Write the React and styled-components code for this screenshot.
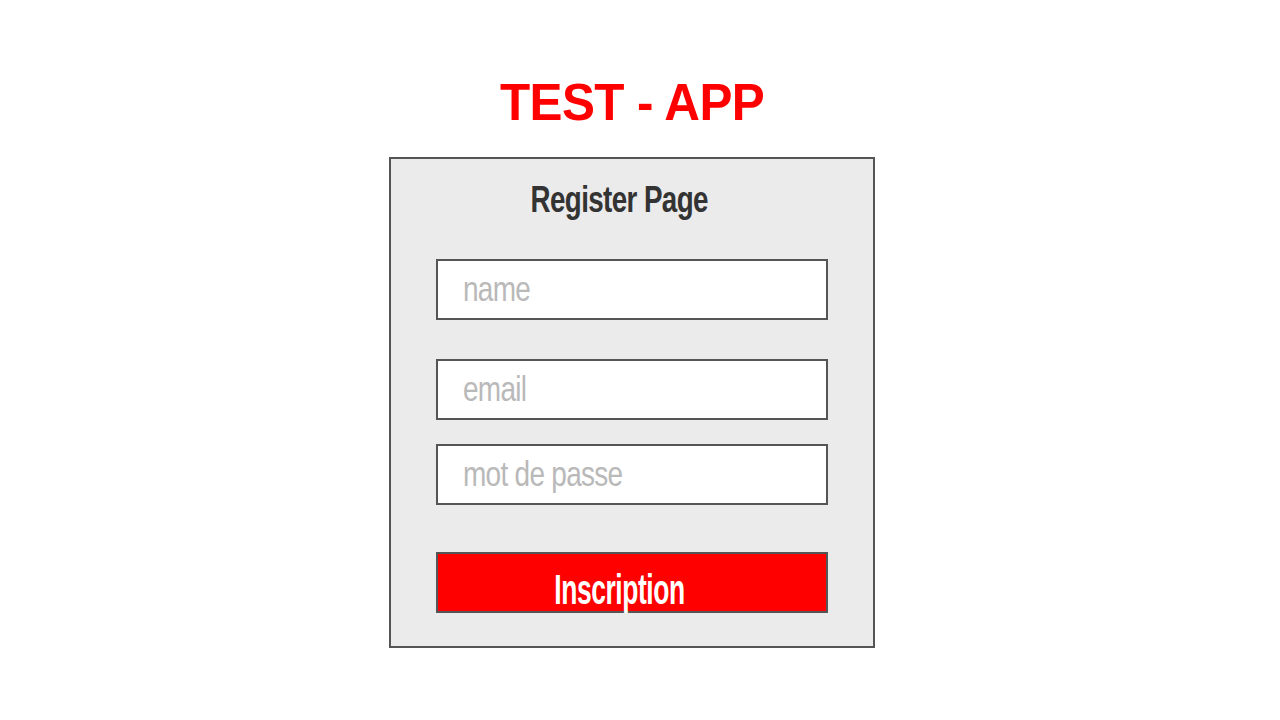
import styled, { createGlobalStyle } from 'styled-components';

const GlobalStyle = createGlobalStyle`
  html, body {
    margin: 0;
    padding: 0;
    background: #ffffff;
  }
`;

// the mock-up uses a condensed face; squeeze Liberation Sans to match
const FIELD_SCALE = 0.8;

export default function App() {
  return (
    <>
      <GlobalStyle />
      <Page>
        <Title>TEST - APP</Title>
        <RegisterCard>
          <h2>Register Page</h2>
          <FieldBox $gap={39}>
            <Field placeholder="name" />
          </FieldBox>
          <FieldBox $gap={24}>
            <Field placeholder="email" />
          </FieldBox>
          <FieldBox $gap={47}>
            <Field type="password" placeholder="mot de passe" />
          </FieldBox>
          <SubmitButton>
            <span>Inscription</span>
          </SubmitButton>
        </RegisterCard>
      </Page>
    </>
  );
}

const Page = styled.main`
  width: 100%;
  min-height: 720px;
  display: flex;
  flex-direction: column;
  align-items: center;
  padding: 72px 16px 0 0;
  box-sizing: border-box;
`;

const Title = styled.h1`
  margin: 0 0 25px 0;
  font-family: 'Liberation Sans', Arial, sans-serif;
  font-weight: 700;
  font-size: 52px;
  line-height: 60px;
  letter-spacing: -0.6px;
  color: #ff0000;
  text-align: center;
  white-space: nowrap;
  transform: scaleX(0.95);
`;

const RegisterCard = styled.section`
  width: 486px;
  height: 491px;
  box-sizing: border-box;
  border: 2px solid #555555;
  background: #ebebeb;
  display: flex;
  flex-direction: column;
  align-items: center;
  padding: 19px 45px 0 45px;

  h2 {
    margin: 0 25px 37px 0;
    font-family: 'Liberation Sans', Arial, sans-serif;
    font-weight: 700;
    font-size: 37px;
    line-height: 44px;
    letter-spacing: -0.8px;
    color: #333333;
    transform: scaleX(0.75);
    white-space: nowrap;
  }
`;

const FieldBox = styled.div`
  width: 392px;
  height: 61px;
  box-sizing: border-box;
  flex-shrink: 0;
  border: 2px solid #555555;
  background: #ffffff;
  overflow: hidden;
  margin-bottom: ${(p) => p.$gap}px;
`;

const Field = styled.input`
  display: block;
  width: ${388 / FIELD_SCALE}px;
  height: 57px;
  box-sizing: border-box;
  border: none;
  background: transparent;
  padding: 0 0 2px ${25 / FIELD_SCALE}px;
  margin: 0;
  font-family: 'Liberation Sans', Arial, sans-serif;
  font-size: 35px;
  letter-spacing: -0.9px;
  color: #333333;
  outline: none;
  transform: scaleX(${FIELD_SCALE});
  transform-origin: left center;

  &::placeholder {
    color: #b9b9b9;
  }
`;

const SubmitButton = styled.button`
  width: 392px;
  height: 61px;
  box-sizing: border-box;
  flex-shrink: 0;
  border: 2px solid #555555;
  border-radius: 0;
  background: #ff0000;
  display: flex;
  justify-content: center;
  align-items: flex-start;
  padding: 15px 26px 0 0;
  cursor: pointer;

  span {
    display: block;
    font-family: 'Liberation Sans', Arial, sans-serif;
    font-weight: 700;
    font-size: 42px;
    line-height: 42px;
    letter-spacing: -0.7px;
    color: #ffffff;
    white-space: nowrap;
    transform: scaleX(0.63);
  }
`;
